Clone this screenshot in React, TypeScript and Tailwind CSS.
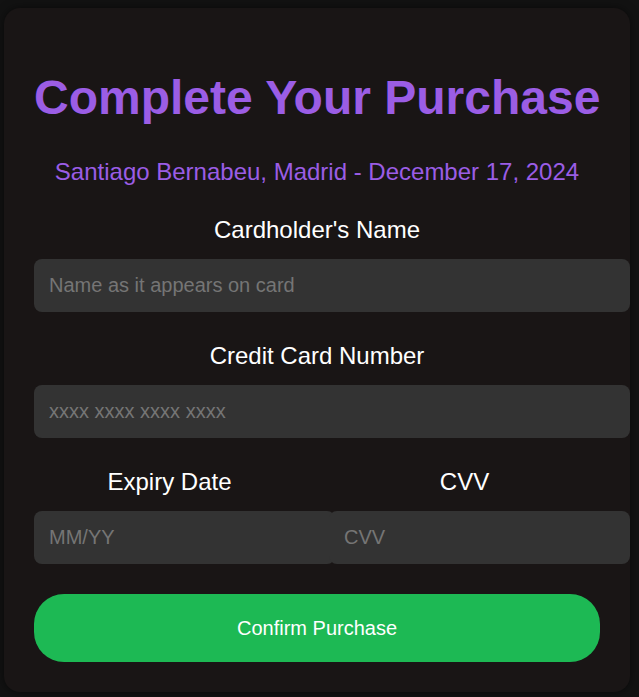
import React from "react";

const font = { fontFamily: '"Liberation Sans", Arial, sans-serif' };

function Field({ label, placeholder }: { label: string; placeholder: string }) {
  return (
    <div className="flex flex-col">
      <label className="text-center text-[24px] leading-[28px] text-white">{label}</label>
      <input
        placeholder={placeholder}
        className="mt-[15px] h-[53px] w-[calc(100%+30px)] rounded-lg bg-[#333333] px-[15px] text-[20px] text-white outline-none placeholder:text-[#757575]"
      />
    </div>
  );
}

export default function App() {
  return (
    <div className="min-h-[697px] w-full bg-[#121212] pt-[8px] pl-[4px]" style={font}>
      <div className="w-[626px] rounded-2xl bg-[#191515] p-[30px] shadow-[0_0_10px_rgba(0,0,0,0.5)]">
        <h1 className="mt-[32px] whitespace-nowrap text-center text-[48px] font-bold leading-[56px] text-[#9b5de5]">
          Complete Your Purchase
        </h1>
        <p className="mt-[32px] text-center text-[24px] leading-[28px] text-[#9b5de5]">
          Santiago Bernabeu, Madrid - December 17, 2024
        </p>
        <div className="mt-[30px] flex flex-col gap-[30px]">
          <Field label="Cardholder's Name" placeholder="Name as it appears on card" />
          <Field label="Credit Card Number" placeholder="xxxx xxxx xxxx xxxx" />
          <div className="flex gap-6">
            <div className="flex-1">
              <Field label="Expiry Date" placeholder="MM/YY" />
            </div>
            <div className="relative flex-1">
              <Field label="CVV" placeholder="CVV" />
            </div>
          </div>
          <button className="h-[68px] w-full rounded-[30px] bg-[#1db954] text-[20px] text-white">
            Confirm Purchase
          </button>
        </div>
      </div>
    </div>
  );
}
